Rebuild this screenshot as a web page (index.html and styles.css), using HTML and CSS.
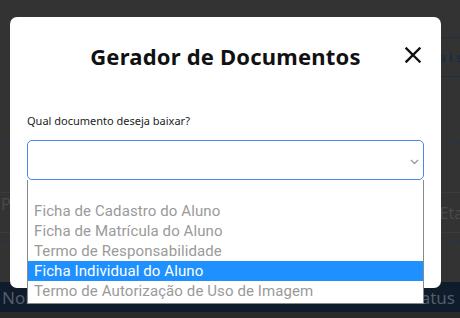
FILE: index.html
```html
<!DOCTYPE html>
<html lang="pt-BR">
<head>
    <meta charset="UTF-8">
    <meta name="viewport" content="width=device-width, initial-scale=1.0">
    <title>Gerador de Documentos</title>
    <link rel="stylesheet" href="styles.css">
</head>
<body>
    <!-- Página por trás do modal -->
    <div class="page">
        <div class="page-tabs">
            <span class="tab-text">Pais</span>
        </div>
        <div class="dash-line first"></div>
        <div class="page-row">
            <span class="cell-left">CEP</span>
            <span class="cell-right">Etapa</span>
        </div>
        <div class="dash-line"></div>
        <div class="table-head">
            <span>Nome</span>
            <span>Status</span>
        </div>
    </div>

    <!-- Modal -->
    <div class="modal">
        <div class="modal-header">
            <h2 class="modal-title">Gerador de Documentos</h2>
            <button class="close-btn" aria-label="Fechar">
                <svg width="16" height="16" viewBox="0 0 16 16">
                    <path d="M1.5 1.5 L14.5 14.5 M14.5 1.5 L1.5 14.5" stroke="#111" stroke-width="2.4" stroke-linecap="square" fill="none"/>
                </svg>
            </button>
        </div>
        <div class="modal-body">
            <label class="field-label">Qual documento deseja baixar?</label>
            <div class="select-wrap">
                <div class="select-box">
                    <svg class="chevron" width="9" height="6" viewBox="0 0 9 6">
                        <path d="M1 1 L4.5 4.5 L8 1" stroke="#999" stroke-width="1.3" fill="none"/>
                    </svg>
                </div>
                <ul class="select-list">
                    <li class="opt">&nbsp;</li>
                    <li class="opt">Ficha de Cadastro do Aluno</li>
                    <li class="opt">Ficha de Matrícula do Aluno</li>
                    <li class="opt">Termo de Responsabilidade</li>
                    <li class="opt active">Ficha Individual do Aluno</li>
                    <li class="opt">Termo de Autorização de Uso de Imagem</li>
                </ul>
            </div>
        </div>
    </div>
</body>
</html>
```

FILE: styles.css
```css
:root {
    --overlay: #333333;
    --navy: #0e1c2c;
    --blue: #4a88e4;
    --highlight: #1e90ff;
    --gray-text: #9a9a9a;
}

body {
    margin: 0;
    padding: 0;
    background: var(--overlay);
    font-family: 'Noto Sans', sans-serif;
    height: 318px;
    overflow: hidden;
    position: relative;
}

/* ---------- página de fundo ---------- */
.page {
    display: flex;
    flex-direction: column;
    padding-top: 37px;
}

.page-tabs {
    margin-left: 430px;
    height: 38px;
    border-top: 1px solid #1c2f47;
    border-bottom: 1px solid #1c2f47;
    display: flex;
    align-items: center;
}

.tab-text {
    color: #1c2c44;
    font-weight: 700;
    font-size: 13px;
    letter-spacing: 3px;
    margin-left: -3px;
}

.dash-line {
    border-top: 1px dashed #1f3350;
    margin-top: 65px;
}

.page-row {
    margin-top: 49px;
    height: 39px;
    border-top: 1px solid #3b3b3b;
    border-bottom: 1px solid #3b3b3b;
    display: flex;
    justify-content: space-between;
    color: #4a4a4a;
    font-size: 16px;
    margin-left: -18px;
}

.cell-right {
    align-self: center;
    margin-right: -22px;
}

.page-row + .dash-line {
    margin-top: 7px;
}

.table-head {
    margin-top: 41px;
    height: 30px;
    background: var(--navy);
    border-bottom: 6px solid #2a2a2a;
    display: flex;
    justify-content: space-between;
    align-items: center;
    color: #555d68;
    font-size: 17px;
    padding: 0 5px 0 2px;
}

/* ---------- modal ---------- */
.modal {
    position: absolute;
    left: 10px;
    top: 17px;
    width: 431px;
    height: 271px;
    background: #fff;
    border-radius: 7px;
    box-sizing: border-box;
}

.modal-header {
    display: flex;
    align-items: center;
    justify-content: center;
    position: relative;
    padding-top: 24px;
}

.modal-title {
    margin: 0;
    font-size: 22px;
    font-weight: 700;
    color: #111;
    line-height: 30px;
    letter-spacing: 0.2px;
}

.close-btn {
    position: absolute;
    right: 20px;
    top: 30px;
    border: none;
    background: none;
    padding: 0;
    width: 16px;
    height: 16px;
    cursor: pointer;
}

.close-btn svg {
    display: block;
}

.modal-body {
    padding: 43px 17px 0 17px;
}

.field-label {
    display: block;
    font-size: 11px;
    color: #222;
    line-height: 14px;
    margin-bottom: 12px;
}

.select-wrap {
    position: relative;
}

.select-box {
    height: 40px;
    box-sizing: border-box;
    border: 1px solid var(--blue);
    border-radius: 5px;
    display: flex;
    align-items: center;
    justify-content: flex-end;
    padding-right: 4px;
}

.chevron {
    margin-top: 3px;
}

.select-list {
    position: absolute;
    left: 0;
    right: 0;
    top: 40px;
    margin: 0;
    padding: 0 0 2px 0;
    list-style: none;
    background: #fff;
    border: 1px solid #8a8a8a;
    border-top: none;
    font-family: 'Roboto', sans-serif;
    font-size: 15px;
    letter-spacing: 0.1px;
    color: var(--gray-text);
}

.opt {
    height: 20px;
    line-height: 20px;
    padding-left: 6px;
    white-space: nowrap;
}

.opt:first-child {
    height: 21px;
}

.opt.active {
    background: var(--highlight);
    color: #fff;
}
```
